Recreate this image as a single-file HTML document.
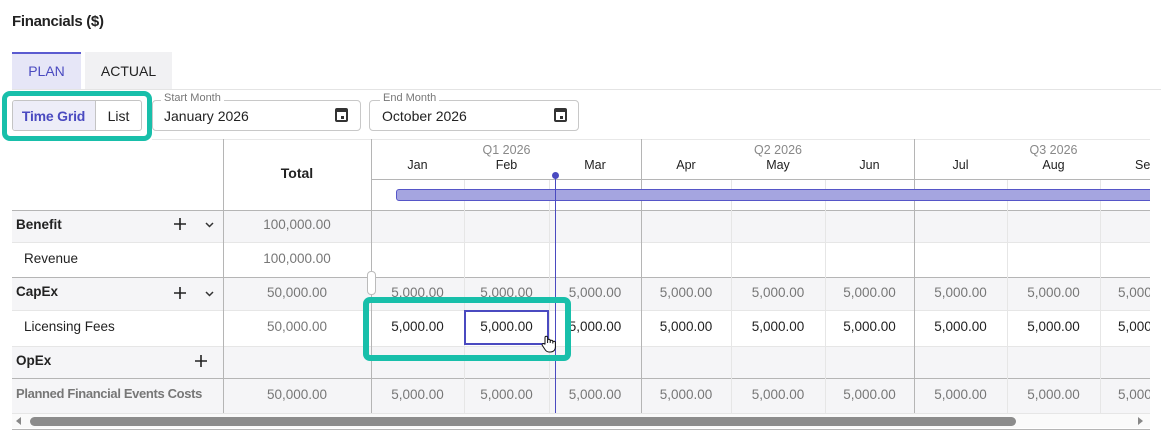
<!DOCTYPE html>
<html><head><meta charset="utf-8"><style>
*{box-sizing:border-box;margin:0;padding:0}
body{width:1161px;height:447px;background:#fff;font-family:"Liberation Sans",sans-serif;position:relative;overflow:hidden;color:#222}
.a{position:absolute}
.t{position:absolute;font-size:13.5px;white-space:nowrap}
.c{position:absolute;font-size:13.5px;text-align:center;white-space:nowrap}
.hl{position:absolute;height:1px}
.vl{position:absolute;width:1px}
</style></head><body>
<div class="t" style="left:12px;top:13px;font-size:15px;font-weight:bold;letter-spacing:-0.3px">Financials ($)</div>
<!-- tabs -->
<div class="a" style="left:12px;top:52px;width:69px;height:37px;background:#e6e6f7;border-top:2px solid #5b5bd0"></div>
<div class="c" style="left:12px;top:63px;width:69px;color:#4a4ac0;font-size:14px">PLAN</div>
<div class="a" style="left:85px;top:52px;width:87px;height:37px;background:#f1f1f3"></div>
<div class="c" style="left:85px;top:63px;width:87px;color:#222;font-size:14px">ACTUAL</div>
<div class="hl" style="left:12px;top:89px;width:1149px;background:#e4e4e4"></div>
<!-- toggle -->
<div class="a" style="left:12px;top:100px;width:130px;height:31px;border:1px solid #c4c4c4;border-radius:3px;overflow:hidden">
 <div class="a" style="left:0;top:0;width:83px;height:29px;background:#ededf8;border-right:1px solid #c4c4c4"></div>
</div>
<div class="c" style="left:12px;top:108px;width:83px;color:#4a4ac0;font-size:14px;font-weight:bold;letter-spacing:-0.2px">Time Grid</div>
<div class="c" style="left:95px;top:108px;width:47px;font-size:14px">List</div>
<div class="a" style="left:2px;top:91px;width:150px;height:50px;border:5px solid #18bfaa;border-radius:8px"></div>
<!-- date fields -->
<div class="a" style="left:152px;top:100px;width:209px;height:31px;border:1px solid #c8c8c8;border-radius:4px"></div>
<div class="t" style="left:161px;top:92px;font-size:11px;color:#777;background:#fff;padding:0 3px">Start Month</div>
<div class="t" style="left:164px;top:108px;font-size:14px">January 2026</div>
<div class="a" style="left:335px;top:108px;width:13px;height:14px;border:2px solid #333;border-top-width:4px;border-radius:2px"><div class="a" style="left:4px;top:4px;width:3px;height:3px;background:#333"></div></div>
<div class="a" style="left:369px;top:100px;width:210px;height:31px;border:1px solid #c8c8c8;border-radius:4px"></div>
<div class="t" style="left:380px;top:92px;font-size:11px;color:#777;background:#fff;padding:0 3px">End Month</div>
<div class="t" style="left:382px;top:108px;font-size:14px">October 2026</div>
<div class="a" style="left:554px;top:108px;width:13px;height:14px;border:2px solid #333;border-top-width:4px;border-radius:2px"><div class="a" style="left:4px;top:4px;width:3px;height:3px;background:#333"></div></div>
<div class="hl" style="left:152px;top:139px;width:1009px;background:#e8e8e8"></div>

<!-- row backgrounds -->
<div class="a" style="left:12px;top:210px;width:1149px;height:32px;background:#f5f5f7"></div>
<div class="a" style="left:12px;top:277px;width:1149px;height:33px;background:#f5f5f7"></div>
<div class="a" style="left:12px;top:346px;width:1149px;height:67px;background:#f5f5f7"></div>
<div class="a" style="left:12px;top:310px;width:1149px;height:36px;background:#fff"></div>
<!-- horizontal lines -->
<div class="hl" style="left:12px;top:210px;width:1149px;background:#b5b5b5"></div>
<div class="hl" style="left:12px;top:242px;width:1149px;background:#e6e6e6"></div>
<div class="hl" style="left:12px;top:277px;width:1149px;background:#b5b5b5"></div>
<div class="hl" style="left:12px;top:310px;width:1149px;background:#e6e6e6"></div>
<div class="hl" style="left:12px;top:346px;width:1149px;background:#e6e6e6"></div>
<div class="hl" style="left:12px;top:378px;width:1149px;background:#b5b5b5"></div>
<div class="hl" style="left:12px;top:413px;width:1149px;background:#e6e6e6"></div>
<div class="hl" style="left:371px;top:179px;width:790px;background:#b5b5b5"></div>
<!-- vertical lines -->
<div class="vl" style="left:223px;top:139px;height:274px;background:#b5b5b5"></div>
<div class="vl" style="left:371px;top:139px;height:274px;background:#b5b5b5"></div>
<div class="vl" style="left:641px;top:139px;height:274px;background:#b5b5b5"></div>
<div class="vl" style="left:914px;top:139px;height:274px;background:#b5b5b5"></div>
<div class="vl" style="left:464px;top:180px;height:233px;background:#e6e6e6"></div>
<div class="vl" style="left:549px;top:180px;height:233px;background:#e6e6e6"></div>
<div class="vl" style="left:731px;top:180px;height:233px;background:#e6e6e6"></div>
<div class="vl" style="left:825px;top:180px;height:233px;background:#e6e6e6"></div>
<div class="vl" style="left:1007px;top:180px;height:233px;background:#e6e6e6"></div>
<div class="vl" style="left:1100px;top:180px;height:233px;background:#e6e6e6"></div>

<!-- header -->
<div class="c" style="left:223px;top:165px;width:148px;font-weight:bold;font-size:14px">Total</div>
<div class="c" style="left:464px;top:143px;width:85px;color:#888;font-size:12.5px">Q1 2026</div>
<div class="c" style="left:731px;top:143px;width:94px;color:#888;font-size:12.5px">Q2 2026</div>
<div class="c" style="left:1007px;top:143px;width:93px;color:#888;font-size:12.5px">Q3 2026</div>
<div class="c" style="left:371px;top:158px;width:93px;font-size:12.5px">Jan</div>
<div class="c" style="left:464px;top:158px;width:85px;font-size:12.5px">Feb</div>
<div class="c" style="left:549px;top:158px;width:92px;font-size:12.5px">Mar</div>
<div class="c" style="left:641px;top:158px;width:90px;font-size:12.5px">Apr</div>
<div class="c" style="left:731px;top:158px;width:94px;font-size:12.5px">May</div>
<div class="c" style="left:825px;top:158px;width:89px;font-size:12.5px">Jun</div>
<div class="c" style="left:914px;top:158px;width:93px;font-size:12.5px">Jul</div>
<div class="c" style="left:1007px;top:158px;width:93px;font-size:12.5px">Aug</div>
<div class="t" style="left:1135px;top:158px;font-size:12.5px">Sep</div>
<div class="a" style="left:396px;top:189px;width:780px;height:12px;background:#a5a5e0;border:1px solid #5656c8;border-radius:3px"></div>

<!-- left labels -->
<div class="t" style="left:16px;top:217px;font-weight:bold;font-size:13.5px">Benefit</div>
<div class="t" style="left:24px;top:251px">Revenue</div>
<div class="t" style="left:16px;top:284px;font-weight:bold">CapEx</div>
<div class="t" style="left:24px;top:319px">Licensing Fees</div>
<div class="t" style="left:16px;top:353px;font-weight:bold">OpEx</div>
<div class="t" style="left:16px;top:386px;font-weight:bold;color:#777;font-size:13px;letter-spacing:-0.35px">Planned Financial Events Costs</div>
<svg class="a" style="left:174px;top:218px" width="12" height="12"><path d="M6 0v12M0 6h12" stroke="#222" stroke-width="1.6"/></svg>
<svg class="a" style="left:205px;top:222px" width="9" height="6"><path d="M1 1l3.5 3.5L8 1" stroke="#333" stroke-width="1.5" fill="none"/></svg>
<svg class="a" style="left:174px;top:287px" width="12" height="12"><path d="M6 0v12M0 6h12" stroke="#222" stroke-width="1.6"/></svg>
<svg class="a" style="left:205px;top:291px" width="9" height="6"><path d="M1 1l3.5 3.5L8 1" stroke="#333" stroke-width="1.5" fill="none"/></svg>
<svg class="a" style="left:195px;top:355px" width="12" height="12"><path d="M6 0v12M0 6h12" stroke="#222" stroke-width="1.6"/></svg>

<!-- totals -->
<div class="c" style="left:223px;top:217px;width:148px;color:#777">100,000.00</div>
<div class="c" style="left:223px;top:251px;width:148px;color:#777">100,000.00</div>
<div class="c" style="left:223px;top:285px;width:148px;color:#777">50,000.00</div>
<div class="c" style="left:223px;top:319px;width:148px;color:#777">50,000.00</div>
<div class="c" style="left:223px;top:387px;width:148px;color:#777">50,000.00</div>

<!-- CapEx row -->
<div class="c" style="left:371px;top:285px;width:93px;color:#777">5,000.00</div>
<div class="c" style="left:464px;top:285px;width:85px;color:#777">5,000.00</div>
<div class="c" style="left:549px;top:285px;width:92px;color:#777">5,000.00</div>
<div class="c" style="left:641px;top:285px;width:90px;color:#777">5,000.00</div>
<div class="c" style="left:731px;top:285px;width:94px;color:#777">5,000.00</div>
<div class="c" style="left:825px;top:285px;width:89px;color:#777">5,000.00</div>
<div class="c" style="left:914px;top:285px;width:93px;color:#777">5,000.00</div>
<div class="c" style="left:1007px;top:285px;width:93px;color:#777">5,000.00</div>
<div class="t" style="left:1118px;top:285px;color:#777">5,000.00</div>
<!-- Licensing row -->
<div class="c" style="left:371px;top:319px;width:93px">5,000.00</div>
<div class="c" style="left:464px;top:319px;width:85px">5,000.00</div>
<div class="c" style="left:549px;top:319px;width:92px">5,000.00</div>
<div class="c" style="left:641px;top:319px;width:90px">5,000.00</div>
<div class="c" style="left:731px;top:319px;width:94px">5,000.00</div>
<div class="c" style="left:825px;top:319px;width:89px">5,000.00</div>
<div class="c" style="left:914px;top:319px;width:93px">5,000.00</div>
<div class="c" style="left:1007px;top:319px;width:93px">5,000.00</div>
<div class="t" style="left:1118px;top:319px">5,000.00</div>
<!-- Planned row -->
<div class="c" style="left:371px;top:387px;width:93px;color:#777">5,000.00</div>
<div class="c" style="left:464px;top:387px;width:85px;color:#777">5,000.00</div>
<div class="c" style="left:549px;top:387px;width:92px;color:#777">5,000.00</div>
<div class="c" style="left:641px;top:387px;width:90px;color:#777">5,000.00</div>
<div class="c" style="left:731px;top:387px;width:94px;color:#777">5,000.00</div>
<div class="c" style="left:825px;top:387px;width:89px;color:#777">5,000.00</div>
<div class="c" style="left:914px;top:387px;width:93px;color:#777">5,000.00</div>
<div class="c" style="left:1007px;top:387px;width:93px;color:#777">5,000.00</div>
<div class="t" style="left:1118px;top:387px;color:#777">5,000.00</div>

<!-- right clip -->
<div class="a" style="left:1150px;top:139px;width:11px;height:291px;background:#fff"></div>

<!-- today line -->
<div class="a" style="left:555px;top:175px;width:1px;height:238px;background:#4a4ac0"></div>
<div class="a" style="left:552px;top:172px;width:7px;height:7px;border-radius:50%;background:#4a4ac0"></div>
<!-- resize handle -->
<div class="a" style="left:367px;top:271px;width:9px;height:24px;background:#fff;border:1px solid #bbb;border-radius:4px"></div>
<!-- selected cell -->
<div class="a" style="left:464px;top:310px;width:85px;height:35px;border:2px solid #4a4ac0"></div>
<div class="a" style="left:363px;top:297px;width:208px;height:64px;border:6px solid #18bfaa;border-radius:7px"></div>
<svg class="a" style="left:539px;top:334px" width="20" height="20" viewBox="0 0 20 20"><path d="M6 10V3.5a1.3 1.3 0 0 1 2.6 0V9V6.5a1.3 1.3 0 0 1 2.6 0V9V7.5a1.3 1.3 0 0 1 2.6 0V9.5V8.5a1.3 1.3 0 0 1 2.6 0V13c0 3-2 5-5 5H10c-2 0-3-1-4-2.5L3.2 11.3a1.2 1.2 0 0 1 2-1.3z" fill="#fff" stroke="#111" stroke-width="1"/></svg>
<!-- scrollbar -->
<div class="a" style="left:12px;top:414px;width:1138px;height:14px;background:#fafafa"></div>
<div class="a" style="left:16px;top:417px;width:0;height:0;border-top:4px solid transparent;border-bottom:4px solid transparent;border-right:5px solid #888"></div>
<div class="a" style="left:30px;top:417px;width:986px;height:9px;background:#8c8c8c;border-radius:5px"></div>
<div class="a" style="left:1138px;top:417px;width:0;height:0;border-top:4px solid transparent;border-bottom:4px solid transparent;border-left:5px solid #888"></div>
<div class="hl" style="left:12px;top:429px;width:1138px;background:#b5b5b5"></div>
</body></html>
